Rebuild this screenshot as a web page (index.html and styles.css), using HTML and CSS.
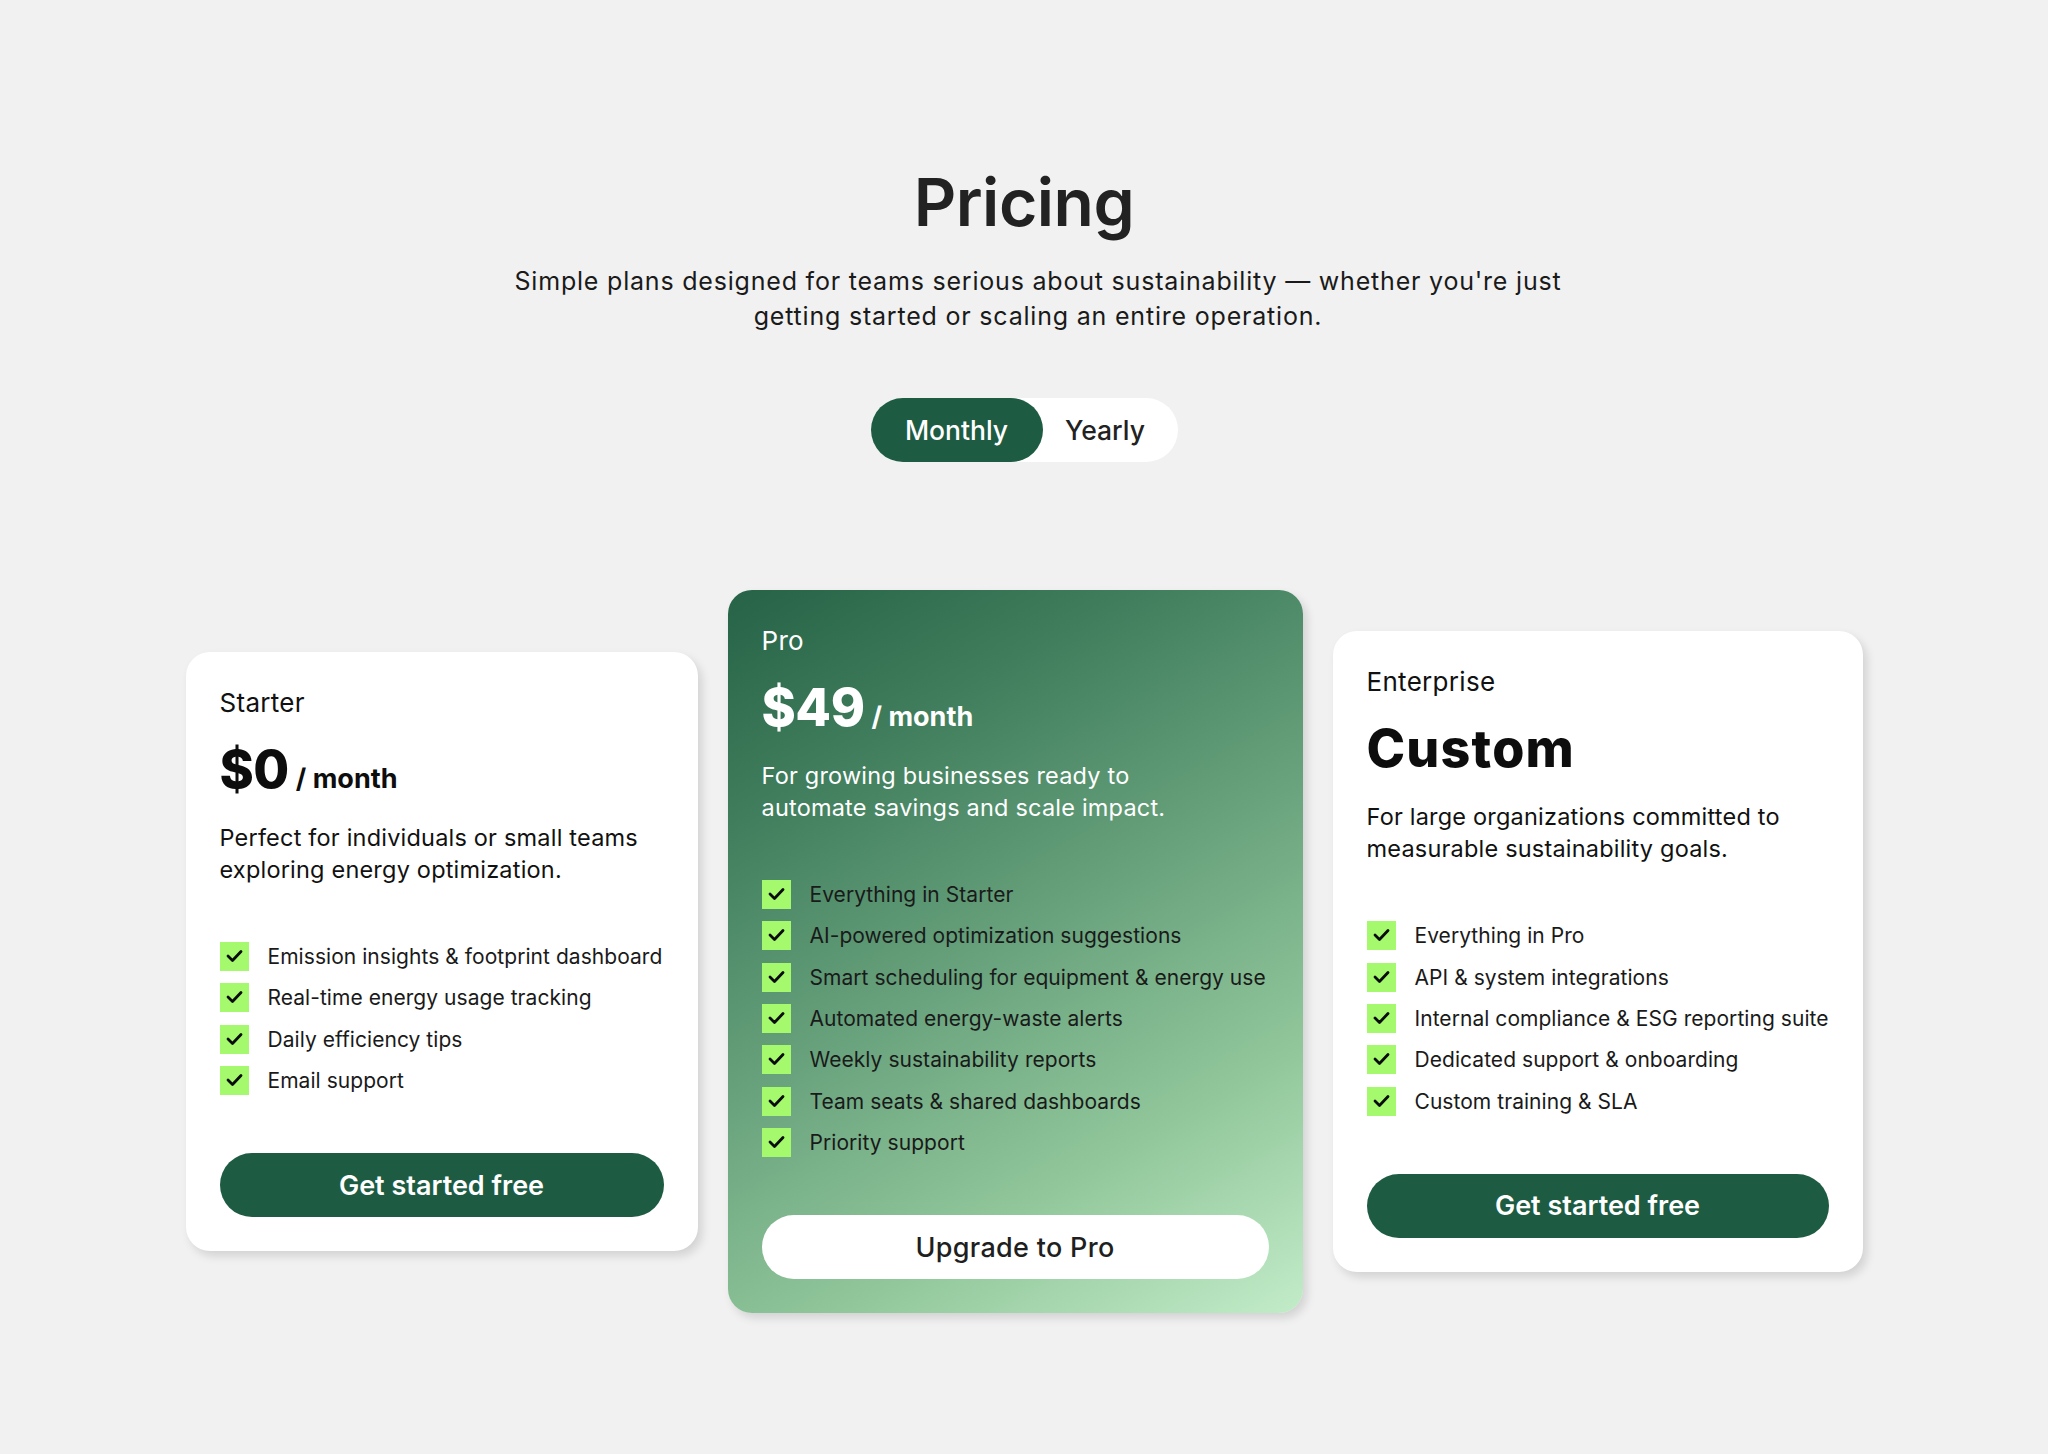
FILE: index.html
```html
<!DOCTYPE html>
<html lang="en">
<head>
<meta charset="utf-8">
<title>Pricing</title>
<link rel="stylesheet" href="styles.css">
</head>
<body>
<main class="pricing">
  <header class="pricing-head">
    <h1 class="pricing-title">Pricing</h1>
    <p class="pricing-sub">Simple plans designed for teams serious about sustainability — whether you're just getting started or scaling an entire operation.</p>
    <div class="toggle">
      <button class="toggle-opt is-active">Monthly</button>
      <button class="toggle-opt">Yearly</button>
    </div>
  </header>

  <section class="plans">
    <article class="card card-starter">
      <div class="card-label">Starter</div>
      <div class="card-price"><span class="amount">$0</span><span class="per">/ month</span></div>
      <p class="card-desc">Perfect for individuals or small teams exploring energy optimization.</p>
      <ul class="features">
        <li><span class="check"><svg viewBox="0 0 29 29"><path d="M8 14 L12.5 18.5 L21 9.5"/></svg></span>Emission insights &amp; footprint dashboard</li>
        <li><span class="check"><svg viewBox="0 0 29 29"><path d="M8 14 L12.5 18.5 L21 9.5"/></svg></span>Real-time energy usage tracking</li>
        <li><span class="check"><svg viewBox="0 0 29 29"><path d="M8 14 L12.5 18.5 L21 9.5"/></svg></span>Daily efficiency tips</li>
        <li><span class="check"><svg viewBox="0 0 29 29"><path d="M8 14 L12.5 18.5 L21 9.5"/></svg></span>Email support</li>
      </ul>
      <button class="btn btn-dark">Get started free</button>
    </article>

    <article class="card card-pro">
      <div class="card-label">Pro</div>
      <div class="card-price"><span class="amount">$49</span><span class="per">/ month</span></div>
      <p class="card-desc">For growing businesses ready to automate savings and scale impact.</p>
      <ul class="features">
        <li><span class="check"><svg viewBox="0 0 29 29"><path d="M8 14 L12.5 18.5 L21 9.5"/></svg></span>Everything in Starter</li>
        <li><span class="check"><svg viewBox="0 0 29 29"><path d="M8 14 L12.5 18.5 L21 9.5"/></svg></span>AI-powered optimization suggestions</li>
        <li><span class="check"><svg viewBox="0 0 29 29"><path d="M8 14 L12.5 18.5 L21 9.5"/></svg></span>Smart scheduling for equipment &amp; energy use</li>
        <li><span class="check"><svg viewBox="0 0 29 29"><path d="M8 14 L12.5 18.5 L21 9.5"/></svg></span>Automated energy-waste alerts</li>
        <li><span class="check"><svg viewBox="0 0 29 29"><path d="M8 14 L12.5 18.5 L21 9.5"/></svg></span>Weekly sustainability reports</li>
        <li><span class="check"><svg viewBox="0 0 29 29"><path d="M8 14 L12.5 18.5 L21 9.5"/></svg></span>Team seats &amp; shared dashboards</li>
        <li><span class="check"><svg viewBox="0 0 29 29"><path d="M8 14 L12.5 18.5 L21 9.5"/></svg></span>Priority support</li>
      </ul>
      <button class="btn btn-light">Upgrade to Pro</button>
    </article>

    <article class="card card-enterprise">
      <div class="card-label">Enterprise</div>
      <div class="card-price"><span class="amount amount-word">Custom</span></div>
      <p class="card-desc">For large organizations committed to measurable sustainability goals.</p>
      <ul class="features">
        <li><span class="check"><svg viewBox="0 0 29 29"><path d="M8 14 L12.5 18.5 L21 9.5"/></svg></span>Everything in Pro</li>
        <li><span class="check"><svg viewBox="0 0 29 29"><path d="M8 14 L12.5 18.5 L21 9.5"/></svg></span>API &amp; system integrations</li>
        <li><span class="check"><svg viewBox="0 0 29 29"><path d="M8 14 L12.5 18.5 L21 9.5"/></svg></span>Internal compliance &amp; ESG reporting suite</li>
        <li><span class="check"><svg viewBox="0 0 29 29"><path d="M8 14 L12.5 18.5 L21 9.5"/></svg></span>Dedicated support &amp; onboarding</li>
        <li><span class="check"><svg viewBox="0 0 29 29"><path d="M8 14 L12.5 18.5 L21 9.5"/></svg></span>Custom training &amp; SLA</li>
      </ul>
      <button class="btn btn-dark">Get started free</button>
    </article>
  </section>
</main>
</body>
</html>
```

FILE: styles.css
```css
* { box-sizing: border-box; }

html, body {
  margin: 0;
  padding: 0;
  background: #f1f1f1;
}

body {
  font-family: Inter, "Open Sans", "Liberation Sans", sans-serif;
  color: #1a1a1a;
  min-height: 1454px;
}

.pricing {
  padding-top: 159px;
  display: flex;
  flex-direction: column;
  align-items: center;
}

.pricing-head {
  display: flex;
  flex-direction: column;
  align-items: center;
  text-align: center;
}

.pricing-title {
  margin: 0;
  font-size: 66px;
  line-height: 86px;
  font-weight: 600;
  color: #222;
  letter-spacing: -0.5px;
}

.pricing-sub {
  margin: 19px 0 0 28px;
  max-width: 1085px;
  font-size: 25px;
  line-height: 35px;
  letter-spacing: 0.8px;
  color: #1a1a1a;
}

.toggle {
  margin-top: 64px;
  display: flex;
  width: 307px;
  height: 64px;
  background: #fff;
  border-radius: 32px;
}

.toggle-opt {
  border: 0;
  background: transparent;
  font-family: inherit;
  font-size: 26.5px;
  font-weight: 500;
  color: #222;
  border-radius: 32px;
  padding: 0;
  cursor: pointer;
}

.toggle-opt.is-active {
  width: 172px;
  background: #1d5c43;
  color: #fff;
}

.toggle-opt:not(.is-active) {
  flex: 1;
  padding-right: 10px;
}

.plans {
  margin-top: 128px;
  display: flex;
  justify-content: center;
  align-items: center;
  gap: 30px;
}

.card {
  display: flex;
  flex-direction: column;
  padding: 34px;
  background: #fff;
  border-radius: 24px;
  box-shadow: 4px 5px 10px rgba(0, 0, 0, 0.13);
}

.card-starter { width: 512px; }
.card-pro { width: 575px; }
.card-enterprise { width: 530px; }

.card-label {
  font-size: 26px;
  line-height: 34px;
  font-weight: 400;
  letter-spacing: 0.3px;
  color: #111;
}

.card-price {
  margin-top: 20px;
  height: 60px;
  display: flex;
  align-items: baseline;
  gap: 7px;
  color: #0d0d0d;
}

.amount {
  font-size: 52px;
  line-height: 60px;
  font-weight: 800;
  letter-spacing: -0.5px;
}

.amount-word {
  letter-spacing: 1.2px;
}

.per {
  font-size: 27px;
  font-weight: 700;
}

.card-desc {
  margin: 22px 0 0;
  max-width: 450px;
  font-size: 23.5px;
  line-height: 32px;
  letter-spacing: 0.2px;
  color: #111;
}

.features {
  margin: 50px 0 0;
  padding: 0;
  list-style: none;
}

.features li {
  display: flex;
  align-items: center;
  gap: 19px;
  height: 41.3px;
  font-size: 21px;
  letter-spacing: 0.05px;
  white-space: nowrap;
  color: #1a1a1a;
}

.check {
  flex: none;
  width: 29px;
  height: 29px;
  background: #a4f96d;
  display: flex;
}

.check svg {
  width: 29px;
  height: 29px;
  fill: none;
  stroke: #0b0b0b;
  stroke-width: 2.8;
  stroke-linecap: round;
  stroke-linejoin: round;
}

.btn {
  margin-top: 52px;
  height: 64px;
  border: 0;
  border-radius: 32px;
  font-family: inherit;
  font-size: 27px;
  cursor: pointer;
}

.btn-dark {
  background: #1d5c43;
  color: #fff;
  font-weight: 600;
}

.btn-light {
  background: #fff;
  color: #1f1f1f;
  font-weight: 500;
  letter-spacing: 0.3px;
}

.card-pro {
  background: linear-gradient(150deg, #266347 0%, #3f7d5c 22%, #6aa47e 50%, #92c79b 75%, #c2ecc8 100%);
}

.card-pro .card-label,
.card-pro .card-price,
.card-pro .card-desc {
  color: #fff;
}
```
